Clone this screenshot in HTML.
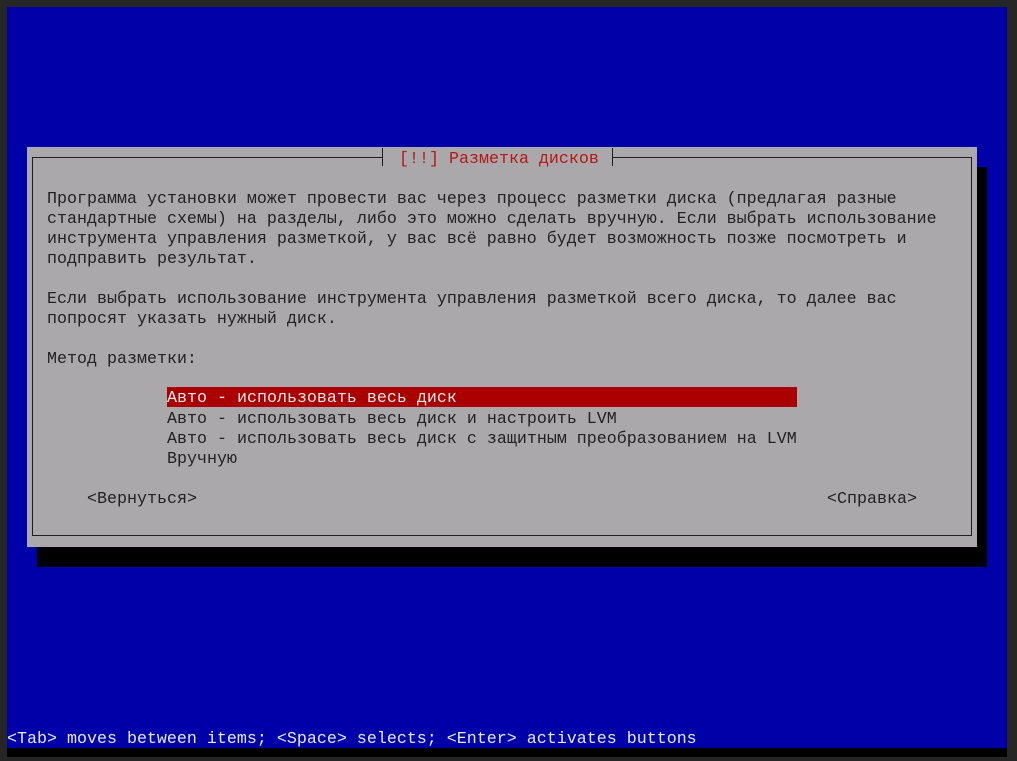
<!DOCTYPE html>
<html><head><meta charset="utf-8"><style>
html,body{margin:0;padding:0;}
body{width:1017px;height:761px;background:#262626;position:relative;overflow:hidden;font-family:"Liberation Mono","DejaVu Sans Mono",monospace;font-size:16.667px;}
.t{position:absolute;white-space:pre;line-height:20px;height:20px;}
#blue{position:absolute;left:7px;top:7px;width:1000px;height:741px;background:#0000a8;}
#blackrow{position:absolute;left:7px;top:748px;width:1000px;height:9px;background:#000;}
#shadow{position:absolute;left:37px;top:167px;width:950px;height:400px;background:#000;}
#dlg{position:absolute;left:27px;top:147px;width:950px;height:400px;background:#aaa8aa;}
#bord{position:absolute;left:32px;top:157px;width:940px;height:379px;border:1px solid #1e1e1e;box-sizing:border-box;}
#gap{position:absolute;left:382px;top:150px;width:231px;height:14px;background:#aaa8aa;}
.tick{position:absolute;top:148px;width:1px;height:18px;background:#1e1e1e;}
.d{color:#222;}
</style></head><body>
<div id="blue"></div>
<div id="blackrow"></div>
<div id="shadow"></div>
<div id="dlg"></div>
<div id="bord"></div>
<div id="gap"></div>
<div class="tick" style="left:382px"></div>
<div class="tick" style="left:612px"></div>
<div class="t" style="left:399px;top:150px;color:#b41818">[!!] Разметка дисков</div>
<div class="t d" style="left:47px;top:190px">Программа установки может провести вас через процесс разметки диска (предлагая разные
стандартные схемы) на разделы, либо это можно сделать вручную. Если выбрать использование
инструмента управления разметкой, у вас всё равно будет возможность позже посмотреть и
подправить результат.

Если выбрать использование инструмента управления разметкой всего диска, то далее вас
попросят указать нужный диск.

Метод разметки:</div>
<div style="position:absolute;left:167px;top:387px;width:630px;height:20px;background:#aa0000;"></div>
<div class="t" style="left:167px;top:389px;color:#e8e8e8">Авто - использовать весь диск</div>
<div class="t d" style="left:167px;top:410px;height:60px">Авто - использовать весь диск и настроить LVM
Авто - использовать весь диск с защитным преобразованием на LVM
Вручную</div>
<div class="t d" style="left:87px;top:490px">&lt;Вернуться&gt;</div>
<div class="t d" style="left:827px;top:490px">&lt;Справка&gt;</div>
<div class="t" style="left:7px;top:730px;color:#e8e8f0">&lt;Tab&gt; moves between items; &lt;Space&gt; selects; &lt;Enter&gt; activates buttons</div>
</body></html>
